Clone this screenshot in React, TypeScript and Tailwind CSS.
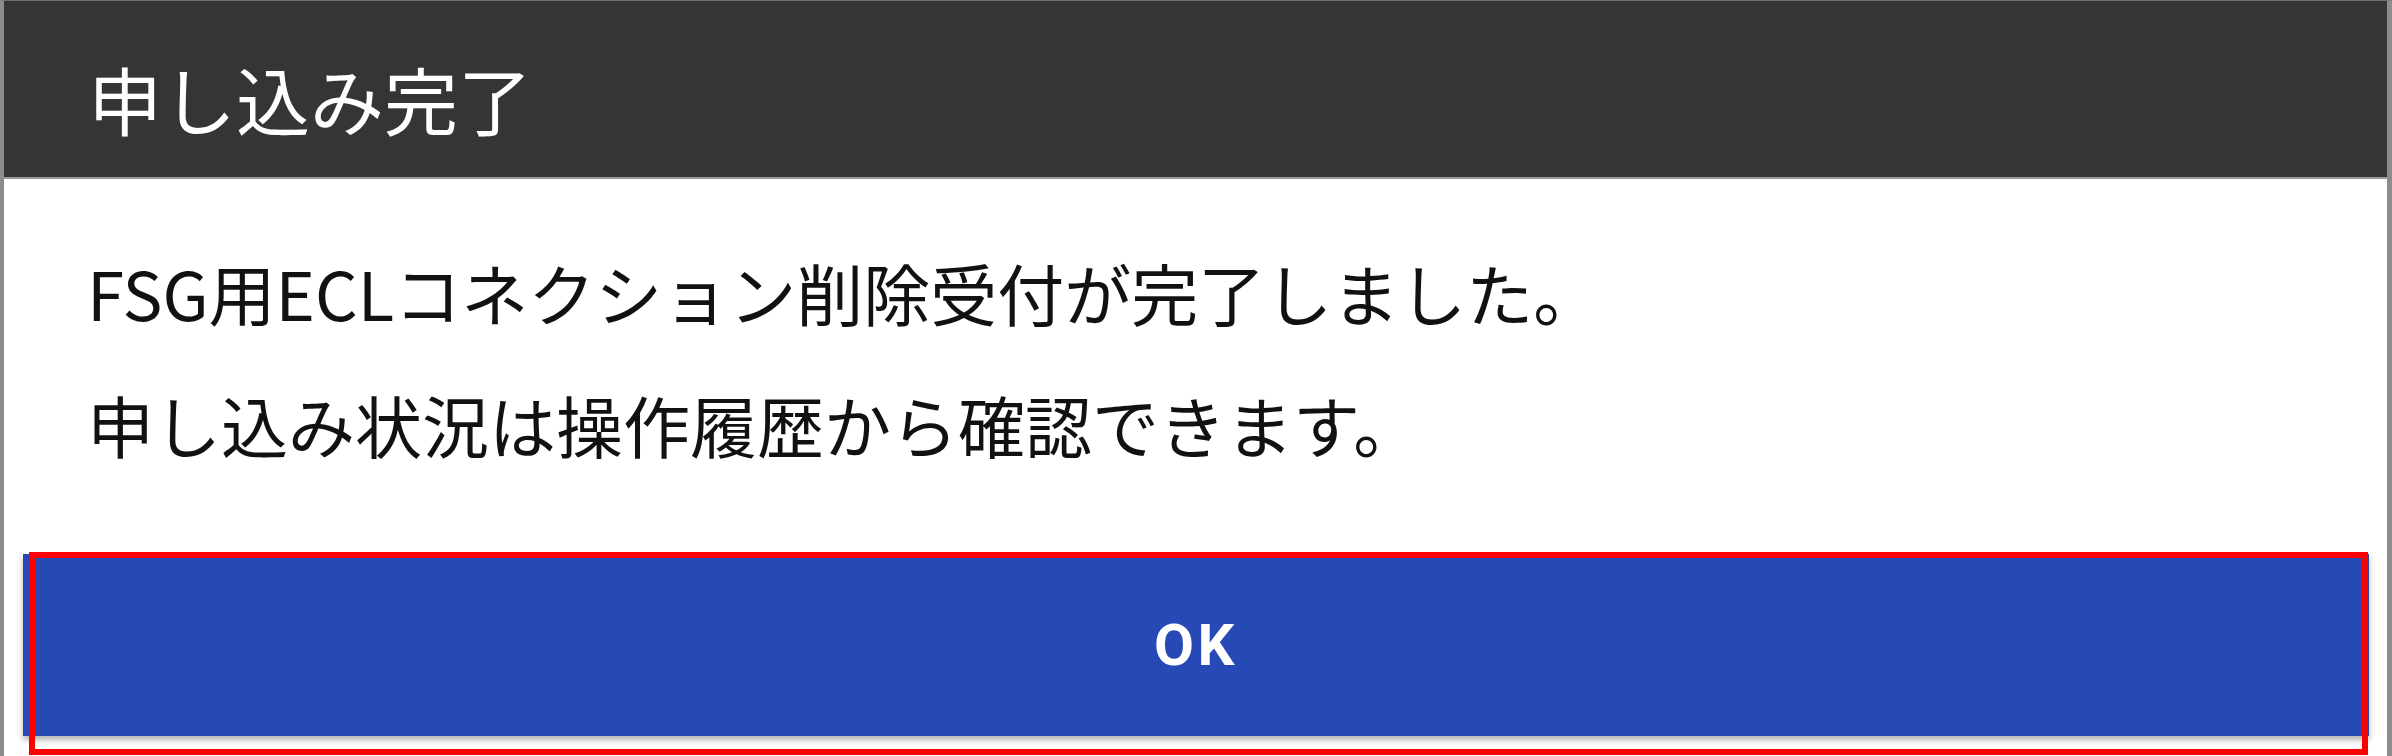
import React from "react";

const jp = '"Noto Sans CJK JP", "Noto Sans", sans-serif';

export default function App() {
  return (
    <div className="relative h-[756px] w-[2392px] overflow-hidden bg-white">
      <div className="flex h-full flex-col border-t border-l-4 border-r-[5px] border-t-[#6f6f6f] border-l-[#8c8c8c] border-r-[#8c8c8c]">
        {/* header */}
        <div className="flex h-[178px] shrink-0 items-center border-b-2 border-[#9a9a9a] bg-[#353535] pl-[84px] pt-[18px]">
          <h1
            className="text-[74px] leading-none text-white"
            style={{ fontFamily: jp }}
          >
            申し込み完了
          </h1>
        </div>

        {/* body */}
        <div className="flex flex-1 flex-col pt-[65px]" style={{ fontFamily: jp }}>
          <div className="flex flex-col gap-[36px] pl-[83px] text-[67px] leading-[96px] text-[#111]">
            <p>FSG用ECLコネクション削除受付が完了しました。</p>
            <p>申し込み状況は操作履歴から確認できます。</p>
          </div>

          <div className="mt-[82px] pl-[19px] pr-[18px]">
            <button className="flex h-[182px] w-full items-center justify-center bg-[#2749b5] shadow-[0_4px_6px_rgba(0,0,0,0.3)]">
              <span
                className="text-[58px] font-bold tracking-[0.06em] text-white"
                style={{ fontFamily: 'Roboto, "Liberation Sans", sans-serif' }}
              >
                OK
              </span>
            </button>
          </div>
        </div>
      </div>

      {/* red highlight annotation */}
      <div className="pointer-events-none absolute left-[29px] top-[552px] h-[203px] w-[2339px] border-[6px] border-[#ff0000]" />
    </div>
  );
}
